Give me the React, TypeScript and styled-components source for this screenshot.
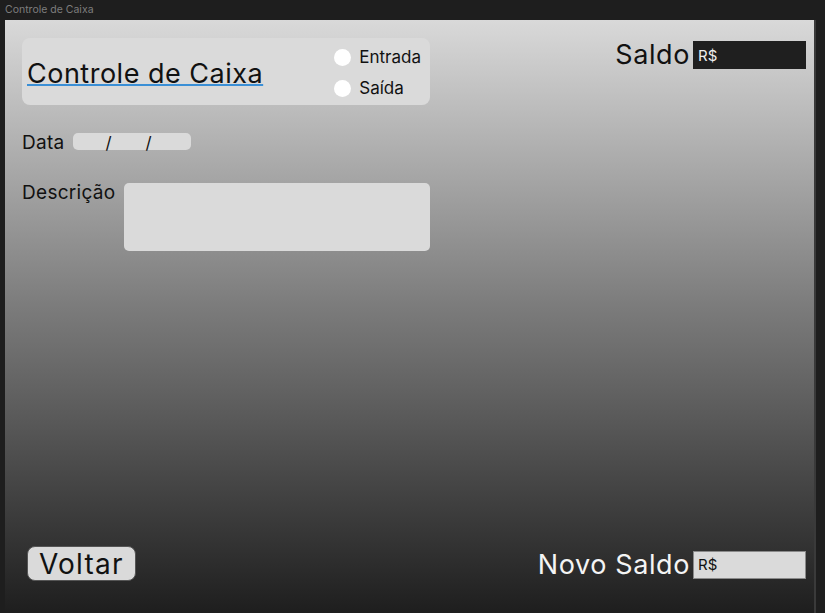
import React from "react";
import styled, { createGlobalStyle } from "styled-components";

const GlobalStyle = createGlobalStyle`
	html, body {
		margin: 0;
		padding: 0;
		background: #1e1e1e;
	}
	* {
		box-sizing: border-box;
	}
`;

const Window = styled.div`
	display: flex;
	flex-direction: column;
	width: 825px;
	height: 613px;
	background: #1e1e1e;
	font-family: Inter, "Noto Sans", sans-serif;
	overflow: hidden;
`;

const TitleBar = styled.div`
	height: 20px;
	padding: 4px 0 0 5px;
	font-size: 10.5px;
	color: #7d7d7d;
	line-height: 12px;
`;

const Panel = styled.div`
	flex: 1;
	display: flex;
	flex-direction: column;
	margin: 0 9px 0 5px;
	padding: 18px 8px 32px 17px;
	background: linear-gradient(#d9d9d9 0%, #7c7c7c 48%, #1e1e1e 100%);
	border-right: 2px solid #3a3a3a;
`;

const TopRow = styled.div`
	display: flex;
	justify-content: space-between;
	align-items: flex-start;
`;

const LeftColumn = styled.div`
	display: flex;
	flex-direction: column;
	width: 408px;
`;

const HeaderCard = styled.div`
	display: flex;
	align-items: center;
	justify-content: space-between;
	height: 67px;
	padding: 0 9px 0 5px;
	background: #dadada;
	border-radius: 8px;
`;

const Title = styled.h1`
	margin: 4px 0 0;
	font-size: 27px;
	font-weight: 400;
	letter-spacing: 0.5px;
	color: #111;
	line-height: 28px;
	text-decoration: underline;
	text-decoration-color: #3a8fd6;
	text-decoration-thickness: 2px;
	text-underline-offset: 1px;
`;

const RadioGroup = styled.div`
	display: flex;
	flex-direction: column;
	gap: 10px;
	margin-top: 2px;
`;

const RadioOption = styled.label`
	display: flex;
	align-items: center;
	gap: 8px;
	font-size: 17px;
	color: #111;
	line-height: 21px;
`;

const RadioDot = styled.span`
	width: 17px;
	height: 17px;
	border-radius: 50%;
	background: #fff;
`;

const FieldRow = styled.div<{ $top: number }>`
	display: flex;
	align-items: flex-start;
	margin-top: ${({ $top }) => $top}px;
`;

const FieldLabel = styled.span`
	font-size: 19px;
	letter-spacing: 0.3px;
	color: #111;
	line-height: 20px;
`;

const DateInput = styled.div`
	display: flex;
	align-items: center;
	width: 118px;
	height: 17px;
	margin: 0 0 0 8px;
	padding-left: 33px;
	background: #dadada;
	border-radius: 5px;
	font-size: 17px;
	color: #111;
`;

const Slash = styled.span`
	width: 40px;
	line-height: 17px;
	padding-top: 4px;
`;

const TextArea = styled.div`
	width: 306px;
	height: 68px;
	margin-left: 8px;
	background: #dadada;
	border-radius: 5px;
`;

const SaldoGroup = styled.div`
	display: flex;
	align-items: center;
	gap: 3px;
	margin-top: 2px;
`;

const BigLabel = styled.span<{ $light?: boolean }>`
	font-size: 27px;
	letter-spacing: 0.6px;
	line-height: 30px;
	color: ${({ $light }) => ($light ? "#f4f4f4" : "#111")};
`;

const MoneyInput = styled.div<{ $dark?: boolean }>`
	display: flex;
	align-items: center;
	width: 113px;
	height: 28px;
	padding-left: 4px;
	font-size: 15px;
	background: ${({ $dark }) => ($dark ? "#1f1f1f" : "#dadada")};
	color: ${({ $dark }) => ($dark ? "#eee" : "#111")};
	border: 1px solid ${({ $dark }) => ($dark ? "#1f1f1f" : "#8a8a8a")};
`;

const BottomRow = styled.div`
	display: flex;
	justify-content: space-between;
	align-items: center;
	margin-top: auto;
	padding-left: 5px;
`;

const BackButton = styled.button`
	height: 35px;
	padding: 0 11px;
	font-family: Inter, "Noto Sans", sans-serif;
	font-size: 28px;
	letter-spacing: 1.2px;
	color: #111;
	background: #dadada;
	border: 1px solid #555;
	border-radius: 8px;
	line-height: 30px;
`;

export default function App() {
	return (
		<>
			<GlobalStyle />
			<Window>
				<TitleBar>Controle de Caixa</TitleBar>
				<Panel>
					<TopRow>
						<LeftColumn>
							<HeaderCard>
								<Title>Controle de Caixa</Title>
								<RadioGroup>
									<RadioOption>
										<RadioDot />
										Entrada
									</RadioOption>
									<RadioOption>
										<RadioDot />
										Saída
									</RadioOption>
								</RadioGroup>
							</HeaderCard>
							<FieldRow $top={28}>
								<FieldLabel>Data</FieldLabel>
								<DateInput>
									<Slash>/</Slash>
									<Slash>/</Slash>
								</DateInput>
							</FieldRow>
							<FieldRow $top={30}>
								<FieldLabel>Descrição</FieldLabel>
								<TextArea />
							</FieldRow>
						</LeftColumn>
						<SaldoGroup>
							<BigLabel>Saldo</BigLabel>
							<MoneyInput $dark>R$</MoneyInput>
						</SaldoGroup>
					</TopRow>
					<BottomRow>
						<BackButton>Voltar</BackButton>
						<SaldoGroup>
							<BigLabel $light>Novo Saldo</BigLabel>
							<MoneyInput>R$</MoneyInput>
						</SaldoGroup>
					</BottomRow>
				</Panel>
			</Window>
		</>
	);
}
